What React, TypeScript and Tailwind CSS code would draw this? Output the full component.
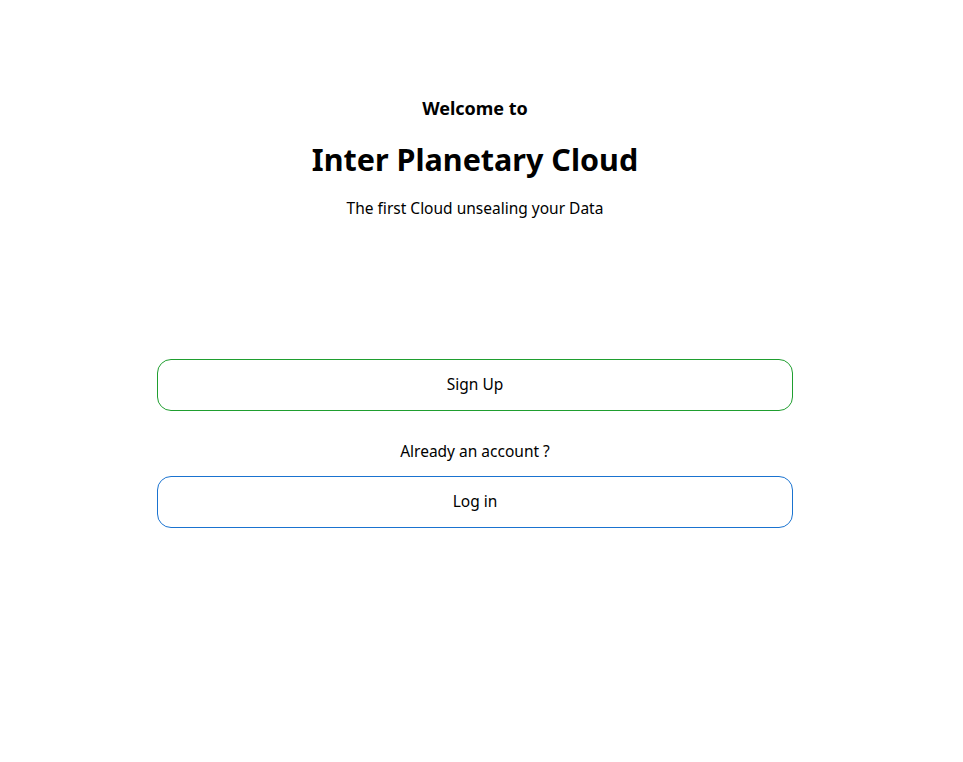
export default function App() {
  return (
    <div className="min-h-screen bg-white text-black" style={{ fontFamily: '"Noto Sans", "Open Sans", sans-serif' }}>
      <div className="w-[950px] flex flex-col items-center pt-[96px]">
        <h3 className="text-[18px] font-bold leading-[24px]">Welcome to</h3>
        <h1 className="mt-[19px] text-[30.5px] font-bold leading-[40px]">Inter Planetary Cloud</h1>
        <p className="mt-[19px] text-[15.5px] leading-[20px]">The first Cloud unsealing your Data</p>

        <div className="mt-[141px] w-[636px] flex flex-col items-center">
          <button className="w-full h-[52px] rounded-[14px] border border-[#1f9e2f] bg-white text-[15.5px]">
            Sign Up
          </button>
          <p className="mt-[30px] text-[15.5px] leading-[20px]">Already an account ?</p>
          <button className="mt-[15px] w-full h-[52px] rounded-[14px] border border-[#1a73d0] bg-white text-[15.5px]">
            Log in
          </button>
        </div>
      </div>
    </div>
  );
}
